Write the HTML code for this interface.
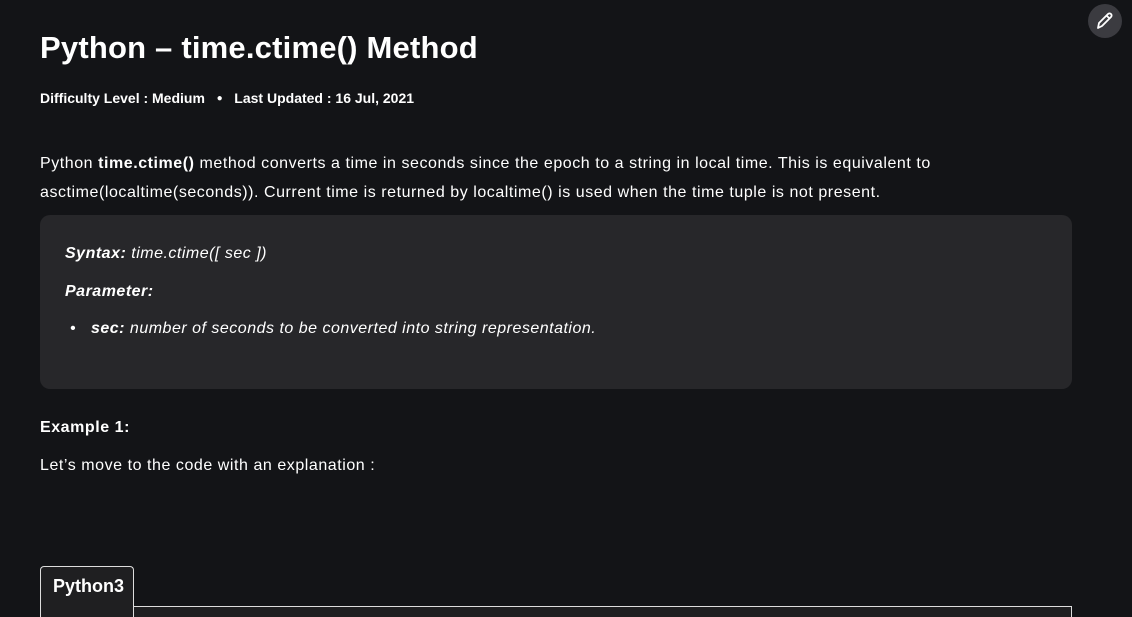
<!DOCTYPE html>
<html><head><meta charset="utf-8"><style>
body{margin:0;width:1132px;height:617px;background:#131417;color:#fff;font-family:"Liberation Sans",sans-serif;overflow:hidden;position:relative}
h1{position:absolute;left:40px;top:30px;margin:0;font-size:31px;font-weight:bold;letter-spacing:0.2px}
.meta{position:absolute;left:40px;top:90px;font-size:14px;font-weight:bold;letter-spacing:0px}
.p{position:absolute;left:40px;font-size:16px;line-height:29px;letter-spacing:0.55px}
.box{position:absolute;left:40px;top:215px;width:1032px;height:174px;background:#27272a;border-radius:10px}
.box div{position:absolute;left:25px;font-style:italic;font-size:16px;letter-spacing:0.5px}
.tab{position:absolute;left:40px;top:566px;width:94px;height:51px;border:1px solid #ddd;border-bottom:none;border-radius:4px 4px 0 0;background:#1f1f21;box-sizing:border-box;font-size:18px;font-weight:bold;padding:9px 0 0 12px;z-index:3}
.line{position:absolute;left:133px;top:606px;width:939px;height:1px;background:#ddd;z-index:2}
.rest{position:absolute;left:40px;top:606px;width:1032px;height:11px;border-left:1px solid #ddd;border-right:1px solid #ddd;background:#1f1f21;box-sizing:border-box;z-index:1}
.edit{position:absolute;left:1088px;top:4px;width:34px;height:34px;border-radius:50%;background:#3b3b40}
</style></head><body>
<div class="edit"><svg width="34" height="34" viewBox="0 0 34 34"><path d="M10 24l1-5 9-9a2 2 0 0 1 3 3l-9 9z M18.5 11.5l3 3" fill="none" stroke="#fff" stroke-width="1.8" stroke-linejoin="round"/></svg></div>
<h1>Python – time.ctime() Method</h1>
<div class="meta">Difficulty Level : Medium &nbsp;&nbsp;<span style="font-size:10px;vertical-align:2px">●</span>&nbsp;&nbsp; Last Updated : 16 Jul, 2021</div>
<div class="p" style="top:149px">Python <b>time.ctime()</b> method converts a time in seconds since the epoch to a string in local time. This is equivalent to<br>asctime(localtime(seconds)). Current time is returned by localtime() is used when the time tuple is not present.</div>
<div class="box">
<div style="top:30px"><b>Syntax:</b> time.ctime([ sec ])</div>
<div style="top:68px"><b>Parameter:</b></div>
<div style="top:105px;left:30px">•&nbsp;&nbsp; <b>sec:</b> number of seconds to be converted into string representation.</div>
</div>
<div class="p" style="top:413px;font-weight:bold">Example 1:</div>
<div class="p" style="top:451px">Let’s move to the code with an explanation :</div>
<div class="rest"></div>
<div class="line"></div>
<div class="tab">Python3</div>
</body></html>
